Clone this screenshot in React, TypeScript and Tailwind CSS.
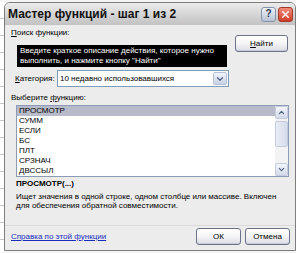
import { X, ChevronDown, ChevronUp } from "lucide-react";

const functions = ["ПРОСМОТР", "СУММ", "ЕСЛИ", "БС", "ПЛТ", "СРЗНАЧ", "ДВССЫЛ"];

function XpButton({ label, accel, width }: { label: string; accel?: number; width: string }) {
  const before = accel === undefined ? label : label.slice(0, accel);
  const key = accel === undefined ? "" : label[accel];
  const after = accel === undefined ? "" : label.slice(accel + 1);
  return (
    <button
      className={`${width} h-[17px] shrink-0 rounded-[3px] border border-[#6b7389] bg-linear-to-b from-[#ffffff] via-[#f4f4f6] to-[#dcdde3] text-[8px] leading-none text-black shadow-[inset_0_-1px_0_#c9cbd6]`}
    >
      {before}
      {key && <span className="underline">{key}</span>}
      {after}
    </button>
  );
}

export default function App() {
  return (
    <div className="flex h-[253px] w-[296px] overflow-hidden bg-[#f4f4f4] pt-[2px] font-['Liberation_Sans',Arial,sans-serif] text-black">
      <div className="w-[4px] shrink-0 bg-[repeating-linear-gradient(to_bottom,#ffffff_0,#ffffff_16px,#c6c6c6_16px,#c6c6c6_17px)]" />
      <div className="flex h-[249px] w-[292px] shrink-0 flex-col overflow-hidden rounded-t-[6px] border border-[#7d7d7d]">
        {/* title bar */}
        <div className="flex h-[22px] shrink-0 items-center bg-linear-to-b from-[#ececec] via-[#d6d6d6] to-[#c2c2c2] pl-[3px] pr-[2px]">
          <span className="text-[12px] font-bold leading-none text-[#111]">Мастер функций - шаг 1 из 2</span>
          <div className="ml-auto flex gap-[2px]">
            <div className="flex h-[15px] w-[15px] items-center justify-center rounded-[3px] border border-[#8592ab] bg-linear-to-b from-[#eef1f7] to-[#b9c2d4] text-[10px] font-bold leading-none text-[#2c3954]">
              ?
            </div>
            <div className="flex h-[15px] w-[15px] items-center justify-center rounded-[3px] border border-[#a23a2a] bg-linear-to-b from-[#f28a78] to-[#cf3b26]">
              <X size={11} strokeWidth={3} color="#ffffff" />
            </div>
          </div>
        </div>

        {/* body */}
        <div className="flex flex-1 flex-col bg-[#ececec] text-[8px] leading-[10px]">
          <div className="flex pl-[6px]">
            <div className="w-[216px] shrink-0">
              <div className="mt-[3px] h-[10px]">
                <span className="underline">П</span>оиск функции:
              </div>
              <div className="ml-[6px] mt-[7px] h-[22px] w-[210px] bg-black px-[3px] pt-[1px] leading-[9.5px] text-white">
                Введите краткое описание действия, которое нужно
                <br />
                выполнить, и нажмите кнопку "Найти"
              </div>
            </div>
            <div className="ml-[8px] mt-[10px]">
              <XpButton label="Найти" accel={0} width="w-[53px]" />
            </div>
          </div>

          <div className="mt-[3px] flex h-[17px] items-center pl-[10px]">
            <div className="w-[42px] shrink-0">
              <span className="underline">К</span>атегория:
            </div>
            <div className="flex h-[17px] w-[172px] items-center border border-[#7f9db9] bg-white">
              <span className="flex-1 pl-[2px]">10 недавно использовавшихся</span>
              <div className="mr-[1px] flex h-[13px] w-[14px] items-center justify-center rounded-[2px] border border-[#b6c1d6] bg-linear-to-b from-[#f1f4fa] to-[#c9d2e4]">
                <ChevronDown size={10} strokeWidth={3} color="#4d6185" />
              </div>
            </div>
          </div>

          <div className="mt-[6px] h-[10px] pl-[6px]">
            Выберите <span className="underline">ф</span>ункцию:
          </div>

          <div className="ml-[11px] mt-[2px] flex h-[72px] w-[273px] border border-[#8c9bb5] bg-white">
            <div className="flex-1">
              {functions.map((f, i) => (
                <div
                  key={f}
                  className={`h-[10px] pl-[2px] leading-[10px] ${i === 0 ? "bg-[#b7bac8]" : ""}`}
                >
                  {f}
                </div>
              ))}
            </div>
            <div className="flex w-[13px] flex-col bg-[#f3f3f5]">
              <div className="flex h-[13px] items-center justify-center rounded-[2px] border border-[#c3cbdc] bg-linear-to-b from-[#f4f6fb] to-[#d3daea]">
                <ChevronUp size={9} strokeWidth={3} color="#4d6185" />
              </div>
              <div className="mt-[2px] h-[26px] rounded-[2px] border border-[#c3cbdc] bg-linear-to-r from-[#e9edf6] to-[#d6dcea]" />
              <div className="mt-auto flex h-[13px] items-center justify-center rounded-[2px] border border-[#c3cbdc] bg-linear-to-b from-[#f4f6fb] to-[#d3daea]">
                <ChevronDown size={9} strokeWidth={3} color="#4d6185" />
              </div>
            </div>
          </div>

          <div className="mt-[2px] h-[10px] pl-[11px] font-bold">ПРОСМОТР(...)</div>
          <div className="mt-[3px] pl-[11px] leading-[9px]">
            Ищет значения в одной строке, одном столбце или массиве. Включен
            <br />
            для обеспечения обратной совместимости.
          </div>

          <div className="mt-auto border-t border-[#dadada]" />
          <div className="flex h-[17px] items-center pb-0 pl-[6px] pr-[5px] mt-[2px] mb-[5px]">
            <span className="text-[#1a2dbd] underline">Справка по этой функции</span>
            <div className="ml-auto flex gap-[4px]">
              <XpButton label="ОК" width="w-[45px]" />
              <XpButton label="Отмена" width="w-[45px]" />
            </div>
          </div>
        </div>
      </div>
    </div>
  );
}
